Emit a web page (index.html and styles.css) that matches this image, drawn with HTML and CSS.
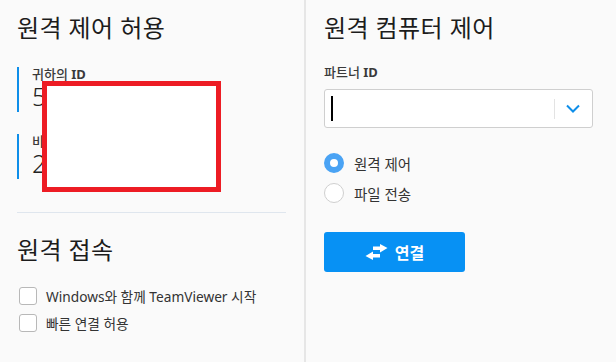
FILE: index.html
```html
<!DOCTYPE html>
<html lang="ko">
<head>
    <meta charset="UTF-8">
    <meta name="viewport" content="width=device-width, initial-scale=1.0">
    <title>TeamViewer</title>
    <link rel="stylesheet" href="styles.css">
</head>
<body>
    <div class="app">
        <!-- Left: allow remote control -->
        <section class="panel panel-left">
            <h1>원격 제어 허용</h1>
            <div class="id-block">
                <div class="id-label">귀하의 <b>ID</b></div>
                <div class="id-value">5</div>
            </div>
            <div class="id-block second">
                <div class="id-label">비</div>
                <div class="id-value">2</div>
            </div>
            <div class="redact"></div>

            <hr class="divider">

            <h2>원격 접속</h2>
            <label class="check"><span class="box"></span>Windows와 함께 TeamViewer 시작</label>
            <label class="check"><span class="box"></span>빠른 연결 허용</label>
        </section>

        <!-- Right: control remote computer -->
        <section class="panel panel-right">
            <h1>원격 컴퓨터 제어</h1>
            <div class="field-label">파트너 <b>ID</b></div>
            <div class="combo">
                <span class="caret"></span>
                <span class="combo-sep"></span>
                <svg class="chevron" width="14" height="9" viewBox="0 0 14 9">
                    <path d="M1 1.5 L7 7.5 L13 1.5" fill="none" stroke="#0e8ee9" stroke-width="2"/>
                </svg>
            </div>

            <div class="radios">
                <label class="radio"><span class="dot checked"></span>원격 제어</label>
                <label class="radio"><span class="dot"></span>파일 전송</label>
            </div>

            <button class="connect" type="button">
                <svg width="23" height="16" viewBox="0 0 23 16">
                    <path d="M8 2.5 L15 2.5 L15 0 L22.5 4 L15 8.5 L15 6 L8 6 Z" fill="#fff"/>
                    <path d="M15 10 L8 10 L8 7.5 L0.5 12 L8 16 L8 13.5 L15 13.5 Z" fill="#fff"/>
                </svg>
                연결
            </button>
        </section>
    </div>
</body>
</html>
```

FILE: styles.css
```css
body {
    margin: 0;
    font-family: "Noto Sans", "Noto Sans CJK KR", sans-serif;
    background-color: #fafafa;
    color: #222;
}

.app {
    display: flex;
    height: 362px;
}

.panel {
    position: relative;
    box-sizing: border-box;
    padding-top: 12px;
}

.panel-left {
    width: 306px;
    padding-left: 17px;
    padding-right: 18px;
    border-right: 2px solid #e6e6e6;
}

.panel-right {
    flex: 1;
    padding-left: 18px;
}

h1, h2 {
    margin: 0;
    font-weight: normal;
    font-size: 24px;
    line-height: 32px;
    color: #1c1c1c;
    letter-spacing: 0.4px;
}

.id-block {
    margin-top: 23px;
    height: 45px;
    border-left: 2px solid #0e8ee9;
    padding-left: 13px;
}

.id-block.second {
    margin-top: 22px;
}

.id-label {
    font-size: 13px;
    line-height: 14px;
    font-weight: 500;
    color: #3a3a3a;
}

.id-value {
    font-size: 25px;
    line-height: 30px;
    font-weight: 300;
    color: #222;
}

.redact {
    position: absolute;
    left: 42px;
    top: 81px;
    width: 169px;
    height: 101px;
    background: #fff;
    border: 5px solid #ed1c24;
}

.divider {
    border: none;
    border-top: 1px solid #dfe6ee;
    margin: 33px 0 0 0;
}

h2 {
    margin-top: 21px;
    margin-bottom: 21px;
}

.check {
    display: flex;
    align-items: center;
    gap: 9px;
    height: 18px;
    margin-bottom: 9px;
    padding-left: 2px;
    font-size: 13.7px;
    color: #333;
}

.box {
    width: 16px;
    height: 16px;
    background: #fff;
    border: 1px solid #b8b8b8;
    border-radius: 3px;
}

.field-label {
    margin-top: 21px;
    font-size: 13px;
    line-height: 14px;
    font-weight: 500;
    color: #3a3a3a;
}

.combo {
    display: flex;
    align-items: center;
    margin-top: 10px;
    width: 269px;
    height: 39px;
    box-sizing: border-box;
    background: #fff;
    border: 1px solid #cfcfcf;
    border-radius: 3px;
}

.caret {
    width: 2px;
    height: 25px;
    margin-left: 6px;
    background: #000;
}

.combo-sep {
    width: 1px;
    height: 20px;
    margin-left: auto;
    background: #e3e3e3;
}

.chevron {
    margin: 0 12px 0 11px;
}

.radios {
    margin-top: 25px;
}

.radio {
    display: flex;
    align-items: center;
    gap: 10px;
    height: 20px;
    margin-bottom: 10px;
    font-size: 14.5px;
    color: #333;
}

.dot {
    width: 18px;
    height: 18px;
    background: #fff;
    border: 1px solid #cfcfcf;
    border-radius: 50%;
}

.dot.checked {
    width: 8px;
    height: 8px;
    border: 6px solid #4aa3f4;
}

.connect {
    display: flex;
    align-items: center;
    justify-content: center;
    gap: 7px;
    margin-top: 29px;
    width: 141px;
    height: 40px;
    border: none;
    border-radius: 3px;
    background-color: #0791f4;
    color: #fff;
    font-family: "Noto Sans", "Noto Sans CJK KR", sans-serif;
    font-size: 16px;
    font-weight: bold;
    cursor: pointer;
}
```
